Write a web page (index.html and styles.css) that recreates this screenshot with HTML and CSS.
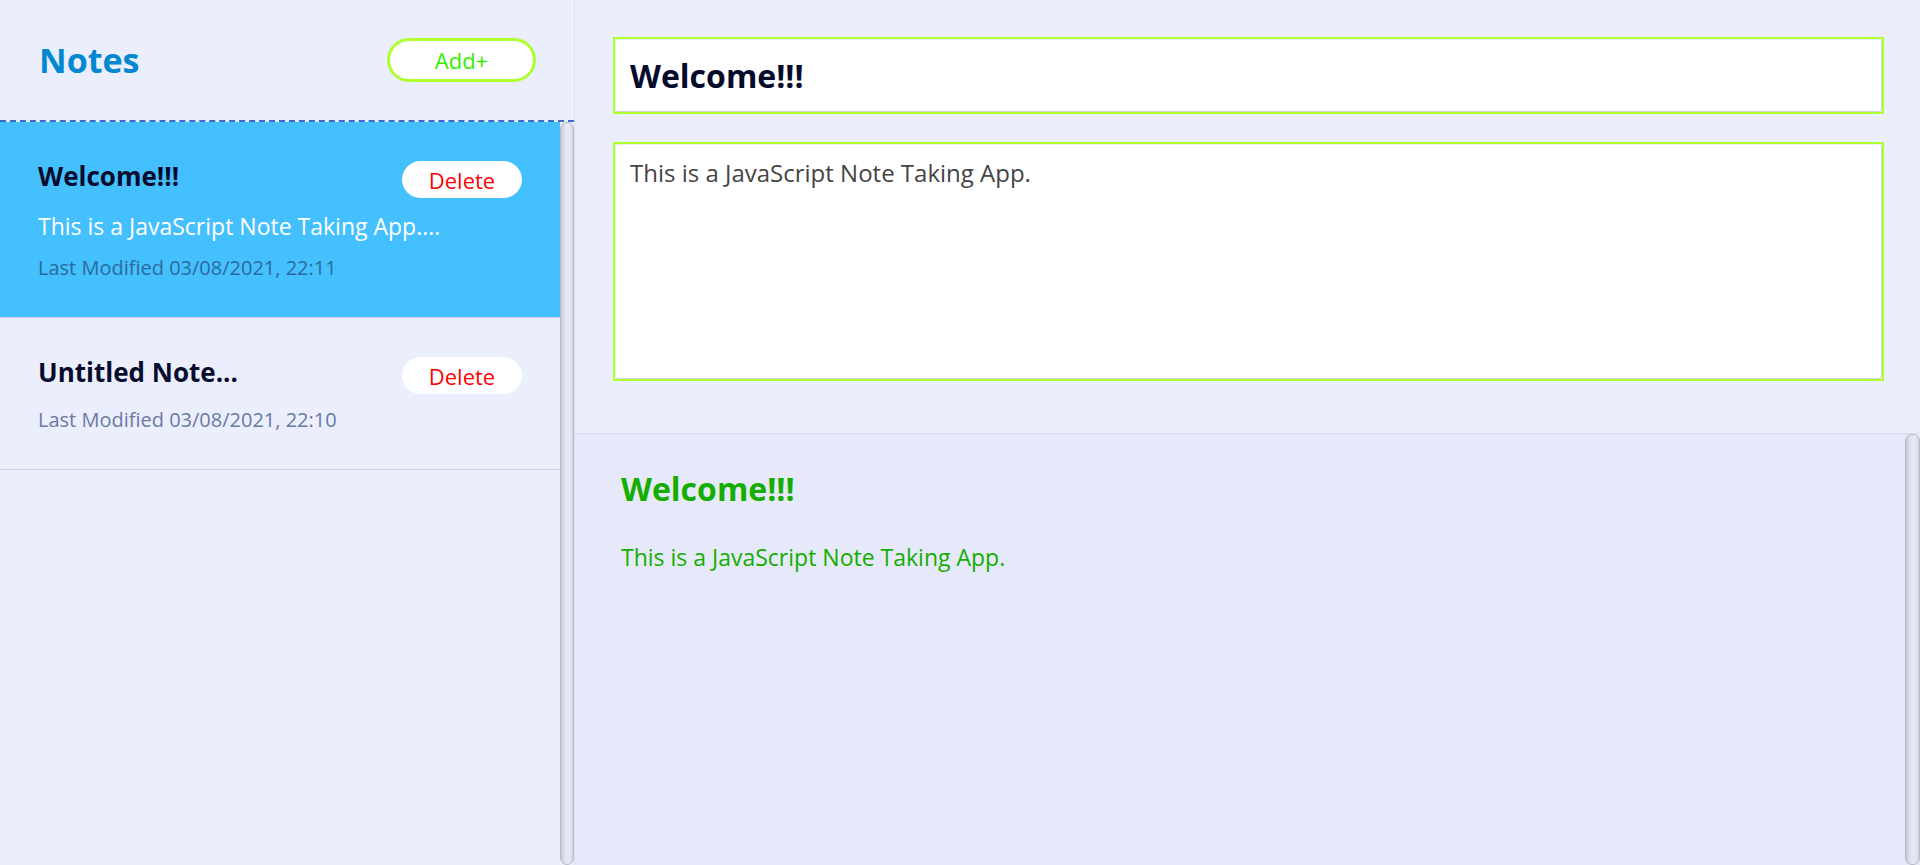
FILE: index.html
```html
<!DOCTYPE html>
<html lang="en">
<head>
<meta charset="utf-8">
<title>Notes</title>
<link rel="stylesheet" href="styles.css">
</head>
<body>
<div class="app">
  <aside class="sidebar">
    <header class="sidebar-header">
      <h1 class="sidebar-title">Notes</h1>
      <button class="add-btn" type="button">Add+</button>
    </header>
    <div class="scroll-area">
      <div class="note-list">
        <div class="note-item active">
          <div class="note-head">
            <strong class="note-title">Welcome!!!</strong>
            <button class="delete-btn" type="button">Delete</button>
          </div>
          <p class="note-body">This is a JavaScript Note Taking App....</p>
          <small class="note-meta">Last Modified 03/08/2021, 22:11</small>
        </div>
        <div class="note-item">
          <div class="note-head">
            <strong class="note-title">Untitled Note...</strong>
            <button class="delete-btn" type="button">Delete</button>
          </div>
          <small class="note-meta">Last Modified 03/08/2021, 22:10</small>
        </div>
      </div>
      <div class="rail" aria-hidden="true"></div>
    </div>
  </aside>
  <main class="main">
    <section class="editor">
      <div class="field"><input class="title-input" type="text" value="Welcome!!!"></div>
      <div class="field"><textarea class="body-input">This is a JavaScript Note Taking App.</textarea></div>
    </section>
    <section class="preview">
      <div class="preview-content">
        <h2 class="preview-title">Welcome!!!</h2>
        <p class="preview-body">This is a JavaScript Note Taking App.</p>
      </div>
      <div class="rail rail-wide" aria-hidden="true"></div>
    </section>
  </main>
</div>
</body>
</html>
```
FILE: styles.css
```css
* { box-sizing: border-box; }
html, body { margin: 0; height: 100%; }
body {
  font-family: "Open Sans", "Noto Sans", sans-serif;
  background: #ebeefd;
  overflow: hidden;
}
.app { display: flex; height: 100vh; }

.sidebar {
  width: 575px;
  flex-shrink: 0;
  display: flex;
  flex-direction: column;
  border-right: 1px solid #dcdfee;
  background: #ebeefd;
}
.sidebar-header {
  height: 122px;
  flex-shrink: 0;
  display: flex;
  align-items: center;
  justify-content: space-between;
  padding: 0 38px 0 39px;
  border-bottom: 2px dashed #3a6cc9;
}
.sidebar-title {
  margin: 0;
  font-size: 34px;
  font-weight: 700;
  color: #0288d1;
}
.add-btn {
  width: 149px;
  height: 44px;
  padding: 0;
  border: 3px solid #adff2f;
  border-radius: 22px;
  background: #fff;
  color: #33ee00;
  font-family: inherit;
  font-size: 22px;
}

.scroll-area {
  flex: 1;
  min-height: 0;
  display: flex;
}
.note-list {
  flex: 1;
  min-width: 0;
  overflow: hidden;
}
.rail {
  width: 14px;
  flex-shrink: 0;
  border: 1px solid #b7bac6;
  border-radius: 7px;
  background: linear-gradient(to right, #c6c9d4 0%, #e2e4f0 35%, #e6e8f3 70%, #d2d5df 100%);
}
.rail-wide { width: 15px; }

.note-item {
  padding: 36px 38px 36px 38px;
  border-bottom: 1px solid #cfd2dc;
}
.note-item.active { background: #45c0ff; }
.note-head {
  display: flex;
  justify-content: space-between;
  align-items: flex-start;
}
.note-title {
  font-size: 26px;
  font-weight: 700;
  color: #070c2c;
}
.delete-btn {
  margin-top: 3px;
  width: 120px;
  height: 37px;
  padding: 0;
  border: none;
  border-radius: 19px;
  background: #fff;
  color: #ff0000;
  font-family: inherit;
  font-size: 22px;
}
.note-body {
  margin: 12px 0 0;
  font-size: 23px;
  color: #fff;
}
.note-meta {
  display: block;
  margin-top: 12px;
  font-size: 20px;
  color: #6b79a3;
}
.note-item.active .note-meta { color: #2b6a9c; }

.main {
  flex: 1;
  display: flex;
  flex-direction: column;
  min-width: 0;
}
.editor {
  flex-shrink: 0;
  display: flex;
  flex-direction: column;
  gap: 28px;
  padding: 37px 36px 52px 38px;
  border-bottom: 1px solid #d9dbe8;
}
.field { border: 2px solid #adff2f; }
.title-input {
  display: block;
  width: 100%;
  height: 73px;
  margin: 0;
  padding: 0 14px;
  border: 1px solid;
  border-color: #ededed #d2d2d2 #d2d2d2 #ededed;
  border-radius: 4px;
  background: #fff;
  outline: none;
  font-family: inherit;
  font-size: 32px;
  font-weight: 700;
  color: #050b2b;
}
.body-input {
  display: block;
  width: 100%;
  height: 235px;
  margin: 0;
  padding: 11px 14px;
  border: 1px solid;
  border-color: #ededed #d2d2d2 #d2d2d2 #ededed;
  border-radius: 4px;
  background: #fff;
  outline: none;
  resize: none;
  font-family: inherit;
  font-size: 24px;
  font-weight: 500;
  color: #444;
}

.preview {
  flex: 1;
  min-height: 0;
  display: flex;
  background: #e6e9f9;
}
.preview-content {
  flex: 1;
  min-width: 0;
  padding: 33px 46px;
}
.preview-title {
  margin: 0;
  font-size: 32px;
  font-weight: 700;
  color: #14ae00;
}
.preview-body {
  margin: 31px 0 0;
  font-size: 23px;
  color: #14ae00;
}
```
